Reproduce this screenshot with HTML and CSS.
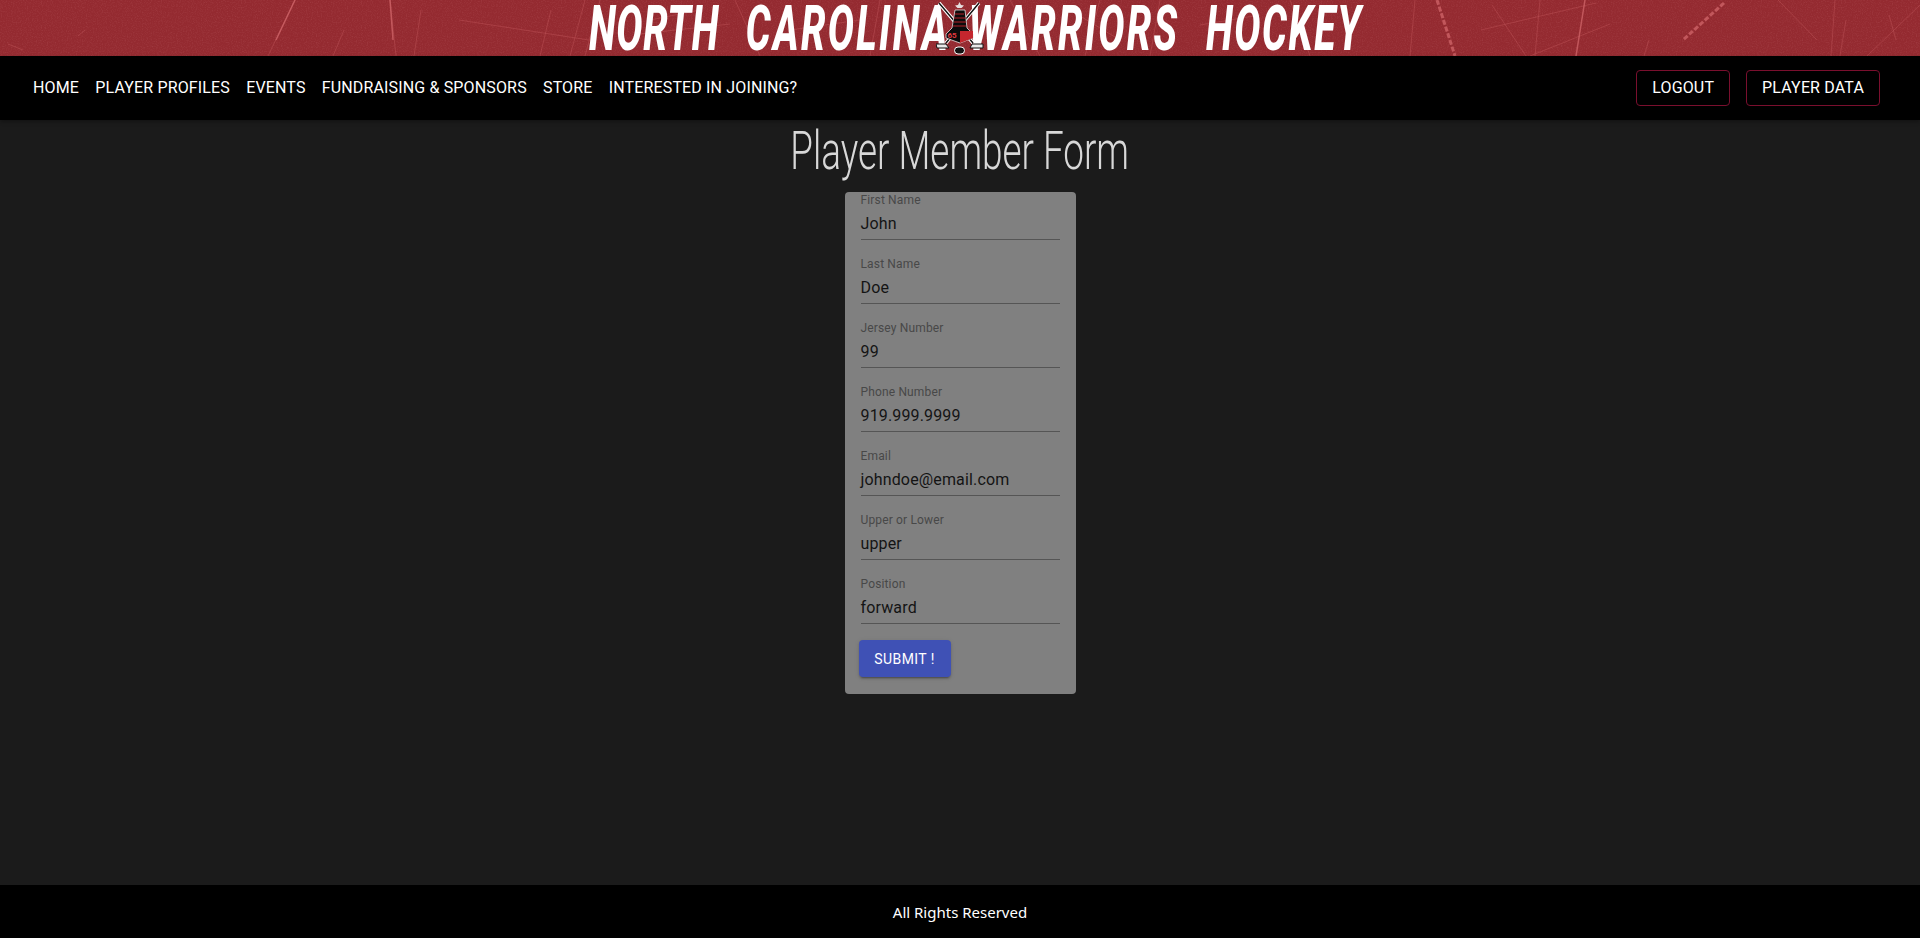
FILE: index.html
```html
<!DOCTYPE html>
<html lang="en">
<head>
<meta charset="utf-8">
<title>North Carolina Warriors Hockey</title>
<link rel="stylesheet" href="styles.css">
</head>
<body>
<header class="banner">
  <svg class="texture" width="1920" height="56" viewBox="0 0 1920 56" aria-hidden="true">
    <filter id="grain"><feTurbulence type="fractalNoise" baseFrequency="0.8" numOctaves="3" seed="4"/><feColorMatrix values="0 0 0 0 0.75  0 0 0 0 0.3  0 0 0 0 0.33  0 0 0 1.4 -0.6"/></filter>
    <rect width="1920" height="56" filter="url(#grain)" opacity="0.2"/>
    <g class="scratch">
      <path d="M295 0L268 56M390 0L396 56M344 30L333 56M459 20L589 40M585 0L570 56M551 10L540 56M421 10L414 56M23 50L8 44M85 30L78 36"/>
      <path d="M600 0L585 56M650 20L700 10M735 0L760 56M790 30L860 20M880 0L870 56M1010 0L1040 56M1070 10L1120 40M1160 0L1150 56M1200 25L1260 15M1290 0L1310 56M640 34L730 24M1100 0L1085 56"/>
      <path d="M1415 0L1410 56M1492 5L1526 56M1540 0L1535 56M1481 30L1596 3M1649 40L1644 56M1778 0L1817 40M1835 0L1831 56M1846 20L1840 56M1920 5L1867 56M1889 15L1896 40M1530 56L1610 24"/>
      <path class="bright" d="M1585 0L1576 56M295 0L276 40M390 0L393 40"/>
      <path class="bright wide" d="M1437 0L1455 56M1724 3L1683 40"/>
    </g>
  </svg>
  <h1 class="brand">
    <span class="word word-north">NORTH</span>
    <span class="word word-carolina">CAROLINA</span>
    <span class="word word-warriors">WARRIORS</span>
    <span class="word word-hockey">HOCKEY</span>
  </h1>
  <svg class="logo" width="48" height="56" viewBox="0 0 48 56" aria-label="Warriors logo">
    <path d="M3 3L37 43M43 3L10 43" stroke="#fff" stroke-width="3.5"/>
    <path d="M3 3L37 43M43 3L10 43" stroke="#111" stroke-width="1.4"/>
    <path d="M23.500 2l1.500 3 3 .5-2.500 2.500h-4L19 5.500l3-.5z" fill="#e6dede"/>
    <path d="M19 10h10l2 18 6 6v4l-13 5-14-5v-4l6-6z" fill="#0c0c0c" stroke="#e6dede" stroke-width=".8"/>
    <path d="M24 31h13v7l-13 5z" fill="#c4262e"/>
    <path d="M19 14h9M18 18h12M18 22h12M17 26h13" stroke="#b52028" stroke-width="1.2"/>
    <text class="logo-num" x="11.500" y="37.500">65</text>
    <path d="M0 44h10l3 4H1zM36 44h11v4H34z" fill="#e8e8e8" stroke="#111" stroke-width="1"/>
    <rect x="18.500" y="47" width="10" height="7" rx="3.500" fill="#111" stroke="#fff" stroke-width="1"/>
  </svg>
</header>
<nav class="navbar">
  <ul class="nav-links">
    <li><a href="#">HOME</a></li>
    <li><a href="#">PLAYER PROFILES</a></li>
    <li><a href="#">EVENTS</a></li>
    <li><a href="#">FUNDRAISING &amp; SPONSORS</a></li>
    <li><a href="#">STORE</a></li>
    <li><a href="#">INTERESTED IN JOINING?</a></li>
  </ul>
  <div class="nav-actions">
    <a class="outline-btn" href="#">LOGOUT</a>
    <a class="outline-btn" href="#">PLAYER DATA</a>
  </div>
</nav>
<main class="content">
  <h2 class="page-title"><span class="page-title-text">Player Member Form</span></h2>
  <form class="card">
    <label class="field"><span class="field-label">First Name</span><span class="field-value">John</span></label>
    <label class="field"><span class="field-label">Last Name</span><span class="field-value">Doe</span></label>
    <label class="field"><span class="field-label">Jersey Number</span><span class="field-value">99</span></label>
    <label class="field"><span class="field-label">Phone Number</span><span class="field-value">919.999.9999</span></label>
    <label class="field"><span class="field-label">Email</span><span class="field-value">johndoe@email.com</span></label>
    <label class="field"><span class="field-label">Upper or Lower</span><span class="field-value">upper</span></label>
    <label class="field"><span class="field-label">Position</span><span class="field-value">forward</span></label>
    <button class="submit" type="button">SUBMIT !</button>
  </form>
</main>
<footer class="footer">All Rights Reserved</footer>
</body>
</html>
```
FILE: styles.css
```css
* { box-sizing: border-box; }
html, body { height: 100%; }
body {
  margin: 0;
  display: flex;
  flex-direction: column;
  background: #1b1b1b;
  font-family: Roboto, sans-serif;
  overflow: hidden;
}
.banner {
  position: relative;
  height: 56px;
  flex: none;
  background: #942a30;
  padding-left: 589px;
}
.texture { position: absolute; inset: 0; }
.scratch path { fill: none; stroke: #c2565c; stroke-width: 1; opacity: .45; }
.scratch path.bright { stroke: #d0666a; stroke-width: 1.5; opacity: .75; }
.scratch path.wide { stroke-width: 3; stroke-dasharray: 5 2; }
.brand {
  position: relative;
  margin: 0;
  display: inline-flex;
  height: 56px;
  font: italic 800 63px/58px Roboto, sans-serif;
  color: #fff;
  white-space: nowrap;
  transform: scaleX(.62);
  transform-origin: left center;
}
.word-north { letter-spacing: 1.1px; margin-right: 43px; }
.word-carolina { letter-spacing: 3.8px; margin-right: 30px; }
.word-warriors { letter-spacing: 3.7px; margin-right: 43px; }
.word-hockey { letter-spacing: 2.6px; }
.logo { position: absolute; left: 936px; top: 0; }
.logo-num { font: 700 8px Roboto, sans-serif; fill: #e23a40; }
.navbar {
  height: 64px;
  flex: none;
  background: #000;
  display: flex;
  align-items: center;
  justify-content: space-between;
  padding: 0 40px 0 33px;
  box-shadow: 0 2px 4px rgba(0,0,0,.3);
  position: relative;
}
.nav-links {
  list-style: none;
  margin: 0;
  padding: 0;
  display: flex;
  gap: 16.2px;
}
.nav-links a, .outline-btn {
  color: #fff;
  text-decoration: none;
  font-size: 16px;
  line-height: 24px;
  letter-spacing: .15px;
}
.nav-actions { display: flex; gap: 16px; }
.outline-btn {
  display: block;
  padding: 5px 15px;
  border: 1px solid #7a0f2e;
  border-radius: 4px;
}
.content {
  flex: 1;
  display: flex;
  flex-direction: column;
  align-items: center;
}
.page-title {
  margin: 0;
  height: 72px;
  font: 350 53px/62px Roboto, sans-serif;
  color: #d8d8d8;
}
.page-title-text {
  display: inline-block;
  transform: scaleX(.695);
}
.card {
  width: 231px;
  height: 502px;
  background: #808080;
  border-radius: 4px;
  padding: 0 16px;
}
.field {
  display: block;
  height: 64px;
  padding-top: 1px;
}
.field-label {
  display: block;
  height: 14px;
  font-size: 12px;
  line-height: 14px;
  letter-spacing: .15px;
  color: #484848;
}
.field-value {
  display: block;
  height: 33px;
  padding-top: 5px;
  font-size: 16px;
  line-height: 24px;
  letter-spacing: .15px;
  color: #141414;
  border-bottom: 1px solid #555;
}
.submit {
  display: block;
  margin: 0 0 0 -2px;
  width: 92px;
  height: 37px;
  background: #3f51b5;
  color: #fff;
  border: 0;
  border-radius: 4px;
  font: 400 14px Roboto, sans-serif;
  letter-spacing: .4px;
  box-shadow: 0 3px 1px -2px rgba(0,0,0,.2), 0 2px 2px rgba(0,0,0,.14), 0 1px 5px rgba(0,0,0,.12);
}
.footer {
  height: 53px;
  flex: none;
  background: #000;
  color: #fff;
  display: flex;
  align-items: center;
  justify-content: center;
  font: 15px "Noto Sans", sans-serif;
}
```
